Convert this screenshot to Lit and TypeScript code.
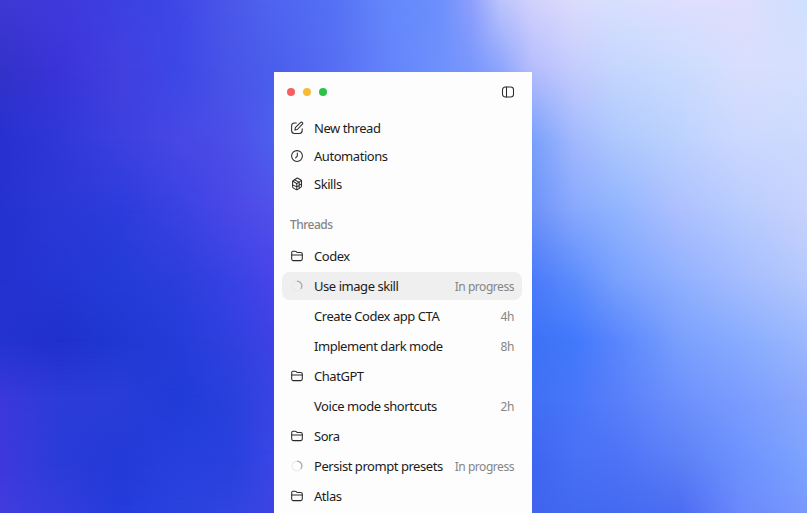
import { LitElement, html, css, svg, nothing } from "lit";
import { customElement } from "lit/decorators.js";

type IconName = "compose" | "clock" | "cube" | "folder" | "spinner" | "none";
interface Row {
  icon: IconName;
  label: string;
  meta?: string;
  active?: boolean;
}

const NAV: Row[] = [
  { icon: "compose", label: "New thread" },
  { icon: "clock", label: "Automations" },
  { icon: "cube", label: "Skills" },
];

const THREADS: Row[] = [
  { icon: "folder", label: "Codex" },
  { icon: "spinner", label: "Use image skill", meta: "In progress", active: true },
  { icon: "none", label: "Create Codex app CTA", meta: "4h" },
  { icon: "none", label: "Implement dark mode", meta: "8h" },
  { icon: "folder", label: "ChatGPT" },
  { icon: "none", label: "Voice mode shortcuts", meta: "2h" },
  { icon: "folder", label: "Sora" },
  { icon: "spinner", label: "Persist prompt presets", meta: "In progress" },
  { icon: "folder", label: "Atlas" },
];

// Wallpaper mesh: colours at the crossings of these columns and rows.
const MESH_X = [0, 60, 120, 180, 230, 274, 330, 390, 440, 470, 500, 532, 574, 616, 680, 740, 807];
const MESH: [number, string][] = [
  [0, "3e38d4 4039da 3c40e2 4048e6 4a58ea 5064f0 5470f4 6488fc 6c90fc 8c9efc bcc4fc d2d2fc dcdcfc d8e0fe dfdffe dfdffd cfe0fe"],
  [70, "3232c8 3a34d8 4240de 3c48e6 4855e8 4a5eec 566cf2 6484fa 6e90fc 7896fc 8ca4fc b4bcfc c4ccfd c4d6fd cadcfe d8defd d6e0fe"],
  [140, "2830d0 3038d6 3c40de 4848e4 4c4ee8 4c60ee 566cf2 5c78f8 6484fa 6c8cfa 7090fa 78a0fb a2b8fd aec8fd bcd2fe ccd8fe ccdafe"],
  [210, "2432d0 2a38d6 2c3cdc 3a42e2 4a48e6 5250ea 5460f0 5c78f8 6080fa 6484fa 688af8 6c92f8 88a8fd 90b4fe aec0fe b8ccfe c8d2fc"],
  [280, "2432d0 2436d4 243cd8 2c3edc 3842e4 4844ea 4850ea 4860f0 486cf4 4870f6 4876f8 4a7afa 5c8cfc 78a0fd 90b0fe a4bcfe b4c8fc"],
  [340, "2434d0 2030cc 2038d2 263cda 3040e0 3e42e4 404ce8 4058ec 4064f0 406af2 3e6ef4 3e72f6 4278fc 5886fc 7aa0fd 88acfe 9cb8fd"],
  [400, "3c38da 2c3cd8 2a3cd8 203cd8 2840dc 3844e4 3c4ce8 3e58ec 4064f0 4068f2 406cf2 4070f4 4876f8 587efa 6c90fc 7a9cfe 8ca8fc"],
  [460, "3e38dc 2a3cd8 243ad8 2640de 2840de 3a46e6 3c4ce8 3e58ec 3e5ef0 3e60f0 3e62f0 3e64f2 4870f4 4e72f6 5c80f6 6c92fe 7ca4fe"],
  [513, "423cdc 343cdc 243cdc 2a42de 3044e0 3c44e2 3c4ce8 3e58ec 3e5eee 3e60ee 3e62ee 4064ee 4268f0 446af0 4c6cf2 6a88fc 7898fc"],
];

const ramp = (colors: string) =>
  `linear-gradient(90deg, ${colors
    .split(" ")
    .map((c, i) => `#${c} ${((MESH_X[i] / 807) * 100).toFixed(2)}%`)
    .join(", ")})`;

const GLYPHS: Record<IconName, unknown> = {
  compose: svg`<path d="M6.300 1.900H4.600C2.700 1.900 1.600 3 1.600 4.900v4.600c0 1.900 1.100 3 3 3h4.600c1.900 0 3-1.100 3-3V7.800"/><path d="M5 9.100l.3-2.400L10.400 1.600c.6-.6 1.400-.6 1.900-.1s.5 1.300-.1 1.900L7.300 8.500z"/>`,
  clock: svg`<circle cx="7" cy="7" r="5.400"/><path d="M7.300 4v3.100L5.600 8.900"/>`,
  cube: svg`<path d="M7.800 1.200l2.800 1.500c.6.300.9.800.9 1.400v4.900c0 .6-.3 1.100-.8 1.400l-3.300 2.200c-.4.200-.8.200-1.200 0l-2.700-1.500c-.6-.3-.9-.8-.9-1.400V4.900c0-.6.3-1.100.8-1.400l3.400-2.200c.3-.2.700-.2 1-.1z"/><path d="M2.900 4.300l3.900 2.300 4.400-3M6.800 6.600v5.900M9.200 5v5.800M2.700 7.900l4.100 2 4.600-3M4.800 3l4.200 2.100"/>`,
  folder: svg`<path d="M1.700 10V3.700c0-.9.600-1.500 1.500-1.500h1.900c.5 0 .8.200 1.100.5l.5.500c.2.200.5.300.8.300h3.200c1 0 1.600.6 1.600 1.600V10c0 1-.6 1.600-1.600 1.600H3.300c-1 0-1.600-.6-1.600-1.600z"/><path d="M1.700 6h10.600"/>`,
  spinner: svg`<circle cx="7" cy="7" r="4.900" stroke="#e9e9e9"/><path d="M7.500 2.100A4.900 4.900 0 0 1 11.200 9.500" stroke="#a8a8a8" stroke-width="1.300"/>`,
  none: nothing,
};

@customElement("app-root")
export class AppRoot extends LitElement {
  static styles = css`
    :host {
      display: grid;
      grid-template: 513px / 807px;
      overflow: hidden;
      font-family: "Noto Sans", "Open Sans", sans-serif;
    }
    .wallpaper, .stage { grid-area: 1 / 1; }
    .wallpaper { display: flex; flex-direction: column; }
    .band { display: grid; flex: none; }
    .shade { grid-area: 1 / 1; }
    .fade {
      -webkit-mask-image: linear-gradient(transparent, #000);
      mask-image: linear-gradient(transparent, #000);
    }
    .stage {
      z-index: 1;
      display: flex;
      padding: 72px 0 0 274px;
      overflow: hidden;
    }
    .window {
      box-sizing: border-box;
      width: 258px;
      height: 441px;
      overflow: hidden;
      background: #fdfdfd;
      padding: 0 10px 0 8px;
    }
    .titlebar {
      display: flex;
      align-items: center;
      height: 40px;
      padding: 0 7px 0 5px;
      gap: 8px;
    }
    .light { width: 8px; height: 8px; border-radius: 50%; }
    .close { background: #f55f62; }
    .minimize { background: #f5bb3c; }
    .zoom { background: #2fc04a; }
    .icon {
      display: block;
      flex: none;
      width: 14px;
      height: 14px;
      fill: none;
      stroke: #2a2a2a;
      stroke-width: 1.05;
      stroke-linecap: round;
      stroke-linejoin: round;
    }
    .toggle { margin-left: auto; }
    .row {
      display: flex;
      align-items: center;
      height: 28px;
      box-sizing: border-box;
      padding: 0 8px;
      border-radius: 8px;
      white-space: nowrap;
    }
    .nav { padding-top: 2px; }
    .heading {
      margin: 16px 0 0;
      padding-left: 8px;
      font-size: 12px;
      font-weight: 500;
      line-height: 22px;
      color: #858585;
      letter-spacing: -0.5px;
    }
    .threads { display: flex; flex-direction: column; gap: 2px; padding-top: 6px; }
    .active { background: #efefef; }
    .label {
      margin-left: 10px;
      font-size: 13px;
      color: #1c1c1c;
      letter-spacing: -0.45px;
    }
    .meta {
      margin-left: auto;
      font-size: 12px;
      color: #858585;
      letter-spacing: -0.45px;
    }
  `;

  private icon(name: IconName) {
    return html`<svg class="icon" viewBox="0 0 14 14">${GLYPHS[name]}</svg>`;
  }

  private row(r: Row) {
    return html`<div class="row ${r.active ? "active" : ""}">
      ${this.icon(r.icon)}<span class="label">${r.label}</span>
      ${r.meta ? html`<span class="meta">${r.meta}</span>` : nothing}
    </div>`;
  }

  render() {
    return html`
      <div class="wallpaper">
        ${MESH.slice(1).map(
          ([y, colors], i) => html`<div class="band" style="height:${y - MESH[i][0]}px">
            <div class="shade" style="background:${ramp(MESH[i][1])}"></div>
            <div class="shade fade" style="background:${ramp(colors)}"></div>
          </div>`
        )}
      </div>
      <div class="stage">
        <div class="window">
          <div class="titlebar">
            <span class="light close"></span><span class="light minimize"></span><span class="light zoom"></span>
            <svg class="icon toggle" viewBox="0 0 14 14">
              <rect x="1.500" y="2" width="11" height="10" rx="2.800" /><path d="M5.500 2v10" />
            </svg>
          </div>
          <div class="nav">${NAV.map((r) => this.row(r))}</div>
          <h2 class="heading">Threads</h2>
          <div class="threads">${THREADS.map((r) => this.row(r))}</div>
        </div>
      </div>
    `;
  }
}
